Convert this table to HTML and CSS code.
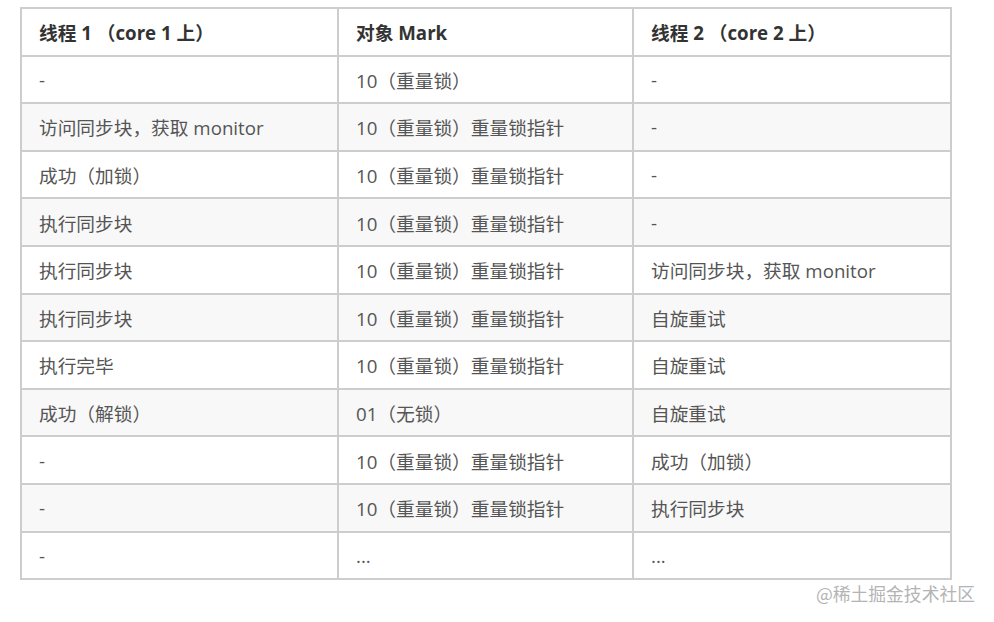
FILE: index.html
```html
<!DOCTYPE html>
<html lang="zh">
<head>
<meta charset="utf-8">
<link rel="stylesheet" href="styles.css">
</head>
<body>
<div class="page">
<table class="grid">
<colgroup><col class="c1"><col class="c2"><col class="c3"></colgroup>
<thead>
<tr><th>线程 1 （core 1 上）</th><th>对象 Mark</th><th>线程 2 （core 2 上）</th></tr>
</thead>
<tbody>
<tr><td>-</td><td>10（重量锁）</td><td>-</td></tr>
<tr><td>访问同步块，获取 monitor</td><td>10（重量锁）重量锁指针</td><td>-</td></tr>
<tr><td>成功（加锁）</td><td>10（重量锁）重量锁指针</td><td>-</td></tr>
<tr><td>执行同步块</td><td>10（重量锁）重量锁指针</td><td>-</td></tr>
<tr><td>执行同步块</td><td>10（重量锁）重量锁指针</td><td>访问同步块，获取 monitor</td></tr>
<tr><td>执行同步块</td><td>10（重量锁）重量锁指针</td><td>自旋重试</td></tr>
<tr><td>执行完毕</td><td>10（重量锁）重量锁指针</td><td>自旋重试</td></tr>
<tr><td>成功（解锁）</td><td>01（无锁）</td><td>自旋重试</td></tr>
<tr><td>-</td><td>10（重量锁）重量锁指针</td><td>成功（加锁）</td></tr>
<tr><td>-</td><td>10（重量锁）重量锁指针</td><td>执行同步块</td></tr>
<tr><td>-</td><td>...</td><td>...</td></tr>
</tbody>
</table>
<div class="mark">@稀土掘金技术社区</div>
</div>
</body>
</html>
```

FILE: styles.css
```css
html, body {
  margin: 0;
  padding: 0;
  background: #fff;
}
.page {
  width: 994px;
  height: 622px;
  padding: 7px 0 0 20px;
  box-sizing: border-box;
  font-family: "Open Sans", "Noto Sans CJK SC", sans-serif;
}
.grid {
  width: 930px;
  table-layout: fixed;
  border-collapse: collapse;
  border: 2px solid #cdcdcd;
  font-size: 18.7px;
  color: #555;
}
.c1 { width: 317px; }
.c2 { width: 295px; }
.c3 { width: 318px; }
.grid tr {
  height: 47.6px;
}
.grid th, .grid td {
  border: 2px solid #cdcdcd;
  padding: 0 10px 0 17px;
  text-align: left;
  vertical-align: middle;
  white-space: nowrap;
}
.grid th {
  font-weight: 700;
  color: #333;
}
.grid tbody tr:nth-child(even) {
  background: #f8f8f8;
}
.mark {
  width: 955px;
  text-align: right;
  margin-top: 1px;
  font-family: "Noto Sans CJK SC", sans-serif;
  font-size: 17.8px;
  line-height: 24px;
  color: #b4b4b4;
  text-shadow: 0 0 1px #fff;
}
```
